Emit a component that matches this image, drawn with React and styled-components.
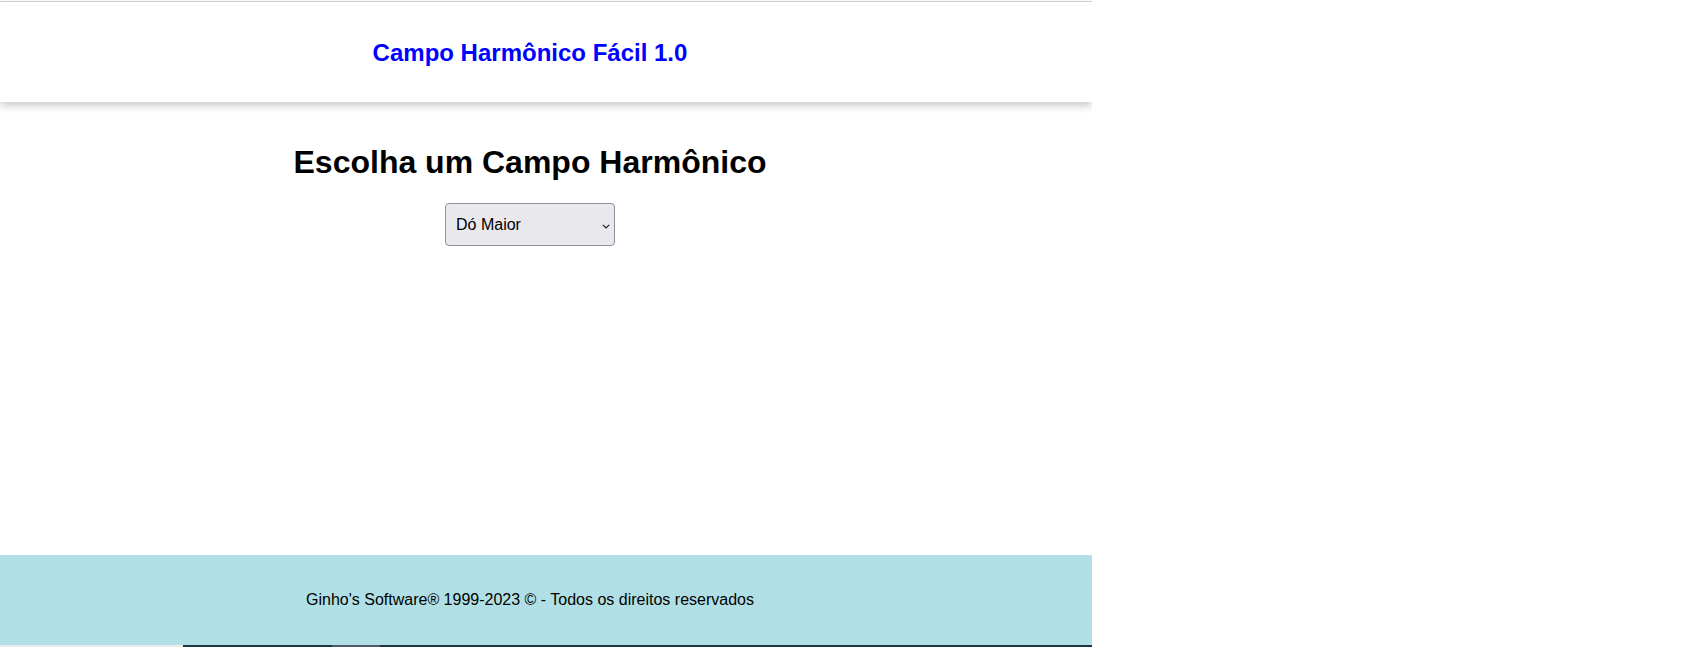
import React, { useState } from 'react';
import styled, { createGlobalStyle, css } from 'styled-components';

const GlobalStyle = createGlobalStyle`
  html, body {
    margin: 0;
    padding: 0;
    background: #ffffff;
    font-family: "Liberation Sans", Arial, sans-serif;
  }
`;

const keys = [
  'Dó Maior',
  'Ré Maior',
  'Mi Maior',
  'Fá Maior',
  'Sol Maior',
  'Lá Maior',
  'Si Maior',
];

// every band centers its content in the left 1060px of the 1092px page
const centered = css`
  box-sizing: border-box;
  padding-right: 32px;
  text-align: center;
`;

const App = () => {
  const [key, setKey] = useState(keys[0]);

  return (
    <>
      <GlobalStyle />
      <Page>
        <Header>
          <AppTitle>Campo Harmônico Fácil 1.0</AppTitle>
        </Header>
        <Main>
          <Heading>Escolha um Campo Harmônico</Heading>
          <SelectWrap>
            <KeySelect value={key} onChange={e => setKey(e.target.value)}>
              {keys.map(k => <option key={k} value={k}>{k}</option>)}
            </KeySelect>
            <Chevron width="8" height="5" viewBox="0 0 8 5">
              <path d="M0.8 0.8 L4 4 L7.2 0.8" fill="none" stroke="#1b1b1b" strokeWidth="1.2" />
            </Chevron>
          </SelectWrap>
        </Main>
        <Footer>
          <Copyright>Ginho's Software® 1999-2023 © - Todos os direitos reservados</Copyright>
        </Footer>
        <BottomStrip>
          <StripPart color="#ececec" width="183px" />
          <StripPart color="#1d3645" width="149px" />
          <StripPart color="#4b5b66" width="48px" />
          <StripPart color="#1d3645" grow />
        </BottomStrip>
      </Page>
    </>
  );
};

const Page = styled.div`
  width: 1092px;
  height: 647px;
  padding-top: 1px;
  box-sizing: border-box;
  display: flex;
  flex-direction: column;
  overflow: hidden;
`;

const Header = styled.header`
  ${centered};
  position: relative;
  z-index: 1;
  height: 101px;
  border-top: 1px solid #cfcfcf;
  padding-top: 37px;
  background: #ffffff;
  box-shadow: 0 4px 8px rgba(0, 0, 0, 0.2);
`;

const AppTitle = styled.h2`
  margin: 0;
  font-size: 24px;
  font-weight: bold;
  color: #0000ff;
`;

const Main = styled.main`
  ${centered};
  height: 453px;
  padding-top: 42px;
  display: flex;
  flex-direction: column;
  align-items: center;
`;

const Heading = styled.h1`
  margin: 0 0 22px;
  font-size: 32px;
  font-weight: bold;
  color: #000000;
`;

const SelectWrap = styled.div`
  position: relative;
  width: 170px;
  height: 43px;
`;

const KeySelect = styled.select`
  appearance: none;
  -webkit-appearance: none;
  width: 100%;
  height: 100%;
  box-sizing: border-box;
  padding: 0 10px;
  border: 1px solid #8f8f9d;
  border-radius: 4px;
  background: #e9e9ed;
  color: #000000;
  font-family: "Liberation Sans", Arial, sans-serif;
  font-size: 16px;
  outline: none;
`;

const Chevron = styled.svg`
  position: absolute;
  right: 5px;
  top: 21px;
  pointer-events: none;
`;

const Footer = styled.footer`
  ${centered};
  height: 90px;
  background: #b0e0e6;
  display: flex;
  align-items: center;
  justify-content: center;
`;

const Copyright = styled.p`
  margin: 0;
  font-size: 16px;
  color: #000000;
`;

const BottomStrip = styled.div`
  display: flex;
  height: 2px;
`;

const StripPart = styled.div`
  background: ${props => props.color};
  width: ${props => props.width || 'auto'};
  flex: ${props => (props.grow ? '1' : 'none')};
`;

export default App;
